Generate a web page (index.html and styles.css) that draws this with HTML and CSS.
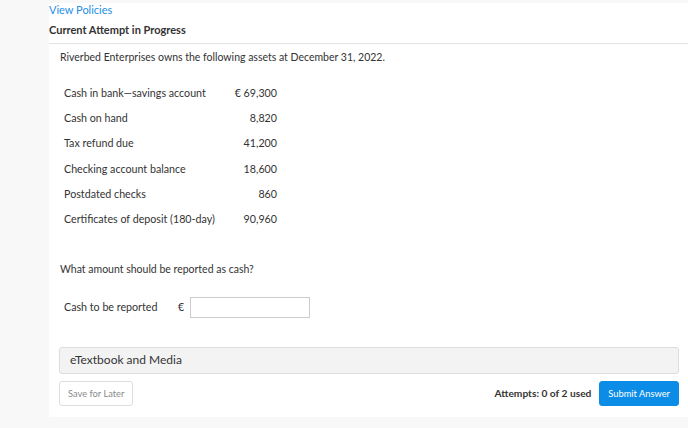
FILE: index.html
```html
<!DOCTYPE html>
<html lang="en">
<head>
    <meta charset="UTF-8">
    <meta name="viewport" content="width=device-width, initial-scale=1.0">
    <title>Current Attempt in Progress</title>
    <link rel="stylesheet" href="styles.css">
</head>
<body>
    <div class="page">
        <div class="panel">
            <div class="panel-head">
                <a href="#" class="policies">View Policies</a>
                <h2 class="attempt-title">Current Attempt in Progress</h2>
            </div>

            <div class="question">
                <p class="question-text">Riverbed Enterprises owns the following assets at December 31, 2022.</p>

                <div class="assets">
                    <div class="asset-row">
                        <span class="asset-label">Cash in bank—savings account</span>
                        <span class="asset-value">€ 69,300</span>
                    </div>
                    <div class="asset-row">
                        <span class="asset-label">Cash on hand</span>
                        <span class="asset-value">8,820</span>
                    </div>
                    <div class="asset-row">
                        <span class="asset-label">Tax refund due</span>
                        <span class="asset-value">41,200</span>
                    </div>
                    <div class="asset-row">
                        <span class="asset-label">Checking account balance</span>
                        <span class="asset-value">18,600</span>
                    </div>
                    <div class="asset-row">
                        <span class="asset-label">Postdated checks</span>
                        <span class="asset-value">860</span>
                    </div>
                    <div class="asset-row">
                        <span class="asset-label">Certificates of deposit (180-day)</span>
                        <span class="asset-value">90,960</span>
                    </div>
                </div>

                <p class="question-text ask">What amount should be reported as cash?</p>

                <div class="answer-row">
                    <label class="answer-label" for="cash">Cash to be reported</label>
                    <span class="currency">€</span>
                    <input type="text" id="cash" class="answer-input">
                </div>
            </div>

            <div class="media-bar">eTextbook and Media</div>

            <div class="actions">
                <button class="btn btn-save">Save for Later</button>
                <div class="actions-right">
                    <span class="attempts">Attempts: 0 of 2 used</span>
                    <button class="btn btn-submit">Submit Answer</button>
                </div>
            </div>
        </div>
    </div>
</body>
</html>
```

FILE: styles.css
```css
:root {
    --link-color: #1b8fe6;
    --text-color: #333333;
    --muted-color: #8a8a8a;
    --page-bg: #f8f8f8;
    --border-color: #e2e2e2;
    --primary-color: #0b8ce6;
}

* {
    margin: 0;
    padding: 0;
    box-sizing: border-box;
}

body {
    font-family: Lato, 'Liberation Sans', Arial, sans-serif;
    color: var(--text-color);
    background-color: var(--page-bg);
    font-size: 11px;
    line-height: 14px;
}

.page {
    padding: 3px 0 0 49px;
}

.panel {
    background-color: white;
    padding-bottom: 11px;
}

.panel-head {
    border-bottom: 1px solid var(--border-color);
    padding-bottom: 6px;
}

.policies {
    display: block;
    color: var(--link-color);
    text-decoration: none;
    font-size: 11px;
}

.attempt-title {
    margin-top: 6px;
    font-size: 11px;
    font-weight: 700;
    color: var(--text-color);
}

.question {
    padding: 6px 0 0 11px;
}

.question-text {
    font-size: 10.5px;
    color: var(--text-color);
}

.assets {
    margin: 16px 0 0 4px;
}

.asset-row {
    display: flex;
    height: 25.3px;
    align-items: center;
    font-size: 10.7px;
}

.asset-label {
    width: 169px;
}

.asset-value {
    width: 44px;
    text-align: right;
}

.ask {
    margin-top: 30px;
}

.answer-row {
    display: flex;
    align-items: center;
    margin: 21px 0 0 4px;
    font-size: 10.7px;
}

.answer-label {
    width: 114px;
}

.currency {
    width: 12px;
}

.answer-input {
    width: 120px;
    height: 21px;
    border: 1px solid #cccccc;
    font-family: inherit;
}

.media-bar {
    margin: 29px 9px 0 10px;
    height: 27px;
    padding-left: 10px;
    display: flex;
    align-items: center;
    background-color: #f3f3f3;
    border: 1px solid #dddddd;
    border-radius: 3px;
    font-size: 12px;
    color: var(--text-color);
}

.actions {
    display: flex;
    justify-content: space-between;
    align-items: center;
    margin: 7px 9px 0 10px;
}

.actions-right {
    display: flex;
    align-items: center;
    gap: 8px;
}

.attempts {
    font-weight: 700;
    font-size: 10.2px;
}

.btn {
    font-family: inherit;
    font-size: 9.3px;
    height: 25px;
    padding: 0 8px;
    border-radius: 3px;
    cursor: pointer;
}

.btn-save {
    background-color: white;
    border: 1px solid #dddddd;
    color: var(--muted-color);
}

.btn-submit {
    background-color: var(--primary-color);
    border: 1px solid var(--primary-color);
    color: white;
}
```
